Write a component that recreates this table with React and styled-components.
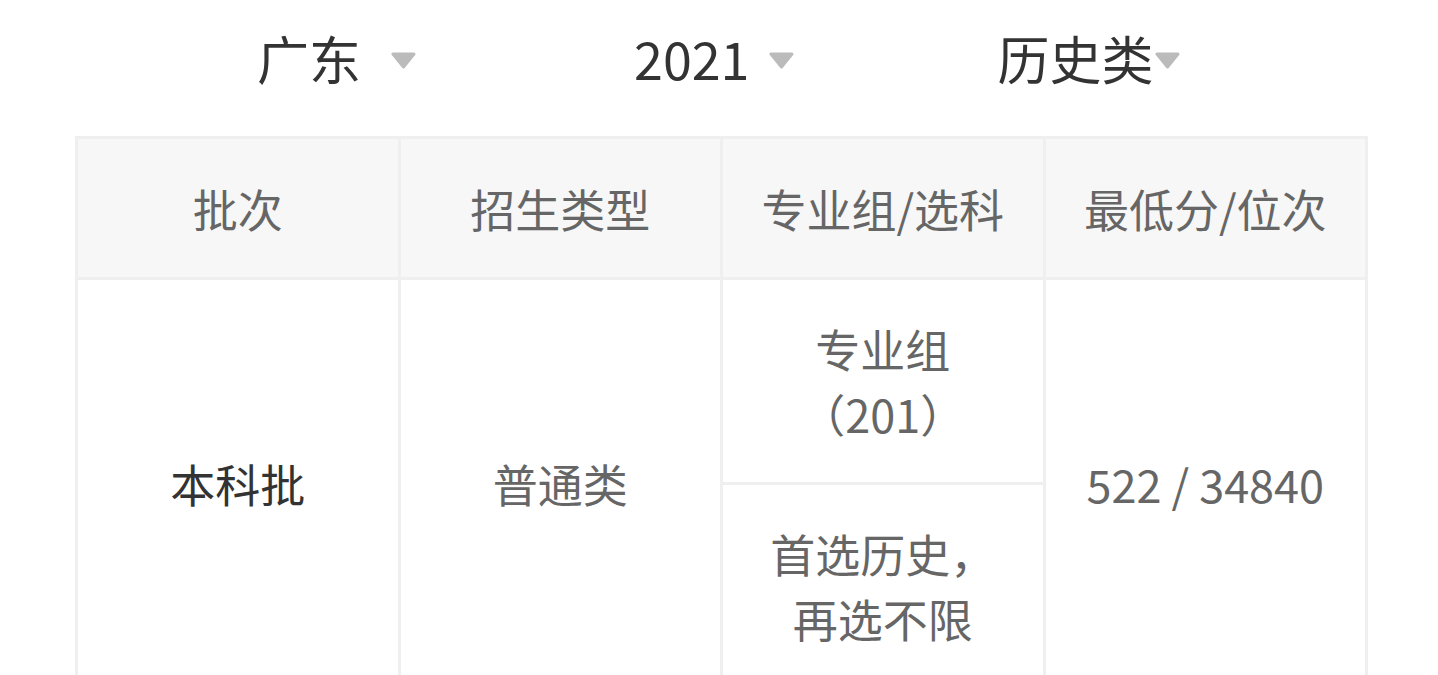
import React from "react";
import styled, { createGlobalStyle } from "styled-components";

const Global = createGlobalStyle`
  html, body { margin: 0; padding: 0; background: #fff; }
  body { font-family: "Noto Sans CJK SC", "Noto Sans", sans-serif; }
`;

const Page = styled.div`
  width: 1438px;
  height: 675px;
  overflow: hidden;
  background: #fff;
`;

const Filters = styled.div`
  display: flex;
  align-items: center;
  height: 116px;
  padding-left: 257px;
  box-sizing: border-box;
`;

const Filter = styled.div`
  display: inline-flex;
  align-items: center;
  margin-left: ${(p) => p.$offset || 0}px;
  font-size: 52px;
  color: #333;
  line-height: 1;
`;

const Caret = styled.svg`
  width: 25px;
  height: 17px;
  margin-left: ${(p) => p.$gap}px;
  margin-top: 4px;
  flex: none;
`;

const TableWrap = styled.div`
  padding: 20px 0 0 75px;
`;

const Table = styled.table`
  border-collapse: collapse;
  table-layout: fixed;
  width: 1293px;
  border: 3px solid #efefef;
`;

const Th = styled.th`
  height: 138px;
  background: #f7f7f7;
  border: 3px solid #efefef;
  font-weight: 400;
  font-size: 45px;
  color: #666;
  text-align: center;
  padding: 0;
`;

const Td = styled.td`
  border: 3px solid #efefef;
  font-size: 45px;
  line-height: 65px;
  color: ${(p) => (p.$strong ? "#333" : "#666")};
  text-align: center;
  vertical-align: middle;
  padding: 0;
  height: ${(p) => p.$h || "auto"};
`;

const Line = styled.div`
  white-space: nowrap;
`;

function Arrow({ gap }) {
  return (
    <Caret $gap={gap} viewBox="0 0 25 17">
      <polygon
        points="2,2 23,2 12.5,15"
        fill="#bbbbbb"
        stroke="#bbbbbb"
        strokeWidth="3"
        strokeLinejoin="round"
      />
    </Caret>
  );
}

export default function App() {
  return (
    <Page>
      <Global />
      <Filters>
        <Filter>
          广东
          <Arrow gap={30} />
        </Filter>
        <Filter $offset={218}>
          2021
          <Arrow gap={20} />
        </Filter>
        <Filter $offset={203}>
          历史类
          <Arrow gap={2} />
        </Filter>
      </Filters>
      <TableWrap>
        <Table>
          <thead>
            <tr>
              <Th>批次</Th>
              <Th>招生类型</Th>
              <Th>专业组/选科</Th>
              <Th>最低分/位次</Th>
            </tr>
          </thead>
          <tbody>
            <tr>
              <Td rowSpan={2} $strong>
                本科批
              </Td>
              <Td rowSpan={2}>普通类</Td>
              <Td $h="202px">
                <Line>专业组</Line>
                <Line>（201）</Line>
              </Td>
              <Td rowSpan={2}>522 / 34840</Td>
            </tr>
            <tr>
              <Td $h="202px">
                <Line>首选历史，</Line>
                <Line>再选不限</Line>
              </Td>
            </tr>
          </tbody>
        </Table>
      </TableWrap>
    </Page>
  );
}
